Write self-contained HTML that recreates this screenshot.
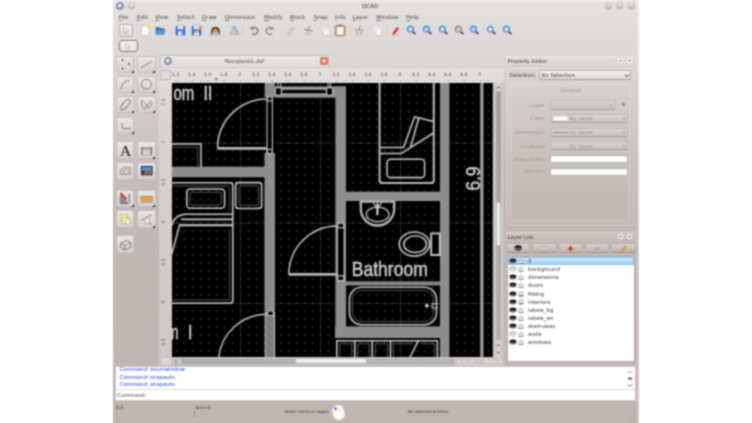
<!DOCTYPE html>
<html><head><meta charset="utf-8"><title>QCAD</title>
<style>
html,body{margin:0;padding:0;background:#fff;}
body{width:752px;height:423px;overflow:hidden;position:relative;font-family:'DejaVu Sans','Liberation Sans',sans-serif;}
#root{position:absolute;left:-12px;top:-12px;width:776px;height:447px;background:#fff;filter:url(#soft);}
#in{left:12px;top:12px;width:752px;height:423px;}
#root div,#root span,#root svg{position:absolute;box-sizing:border-box;}
.t{white-space:nowrap;line-height:10px;height:10px;}
.btn{border:0.5px solid #b5afab;border-bottom:0.8px solid #9f9995;border-radius:2px;background:linear-gradient(#dad5d2,#b8b1ad);}
.tb{border:0.6px solid #c4c1be;border-radius:2px;background:linear-gradient(#e9e7e5,#d3d0cd);}
.cmb{border:0.5px solid #bcb8b5;border-bottom:0.8px solid #a39f9c;border-radius:2px;background:linear-gradient(#d9d5d2,#c7c2bf);}
</style></head><body><svg width="0" height="0" style="position:absolute"><filter id="soft" x="0" y="0" width="100%" height="100%" color-interpolation-filters="sRGB"><feConvolveMatrix order="5" kernelMatrix="0.00037 0.00430 0.00978 0.00430 0.00037 0.00430 0.05062 0.11515 0.05062 0.00430 0.00978 0.11515 0.26192 0.11515 0.00978 0.00430 0.05062 0.11515 0.05062 0.00430 0.00037 0.00430 0.00978 0.00430 0.00037" edgeMode="duplicate" preserveAlpha="true"/></filter></svg><div id="root"><div id="in">

<div style="left:113.1px;top:-8px;width:525.9px;height:439px;background:linear-gradient(#e6e3e2 8px,#e2dfde 16px,#dbd8d6 61px,#d4d0cd 98px,#cdc8c5 133px,#c7c1bd 168px,#c2bab6 208px,#bfb7b3 283px,#bfb6b2 431px);"></div>
<div style="left:113.1px;top:0px;width:525.9px;height:0.8px;background:#f2f1f0;"></div>
<svg style="left:116.3px;top:1.6px;" width="8" height="8" viewBox="0 0 8 8"><circle cx="4" cy="4" r="3.2" fill="#dfe5f4" stroke="#4a69bd" stroke-width="1.2"/><path d="M1.6 2.6A3 3 0 0 1 4.4 1.2" stroke="#8aa2dc" stroke-width="0.8" fill="none"/><circle cx="5" cy="4.9" r="1.6" fill="#f0a22c"/><circle cx="3.6" cy="3.4" r="1" fill="#fdf3d8"/></svg>
<svg style="left:127.3px;top:1.2px;" width="9" height="9" viewBox="0 0 9 9"><circle cx="4.5" cy="4.5" r="3.9" fill="url(#tbg)"/><path d="M2.8 5L4.5 2.6L6.2 5Z" fill="#f8f7f6"/></svg>
<span class="t" style="left:270px;width:200px;text-align:center;top:0.6px;font-size:5.6px;color:#333;">QCAD</span>
<svg width="0" height="0" style="left:0;top:0"><defs><linearGradient id="tbg" x1="0" y1="0" x2="0" y2="1"><stop offset="0" stop-color="#dedcda"/><stop offset="1" stop-color="#b9b6b3"/></linearGradient></defs></svg>
<svg style="left:603.5px;top:1.1px;" width="9" height="9" viewBox="0 0 9 9"><circle cx="4.5" cy="4.5" r="3.9" fill="url(#tbg)"/><path d="M3 4.6L4.5 2.8L6 4.6Z" fill="#f6f5f4"/></svg>
<svg style="left:615.4px;top:1.1px;" width="9" height="9" viewBox="0 0 9 9"><circle cx="4.5" cy="4.5" r="3.9" fill="url(#tbg)"/><path d="M3 4.6L4.5 2.8L6 4.6Z" fill="#f6f5f4"/></svg>
<svg style="left:627.3px;top:1.1px;" width="9" height="9" viewBox="0 0 9 9"><circle cx="4.5" cy="4.5" r="3.9" fill="url(#tbg)"/><path d="M3 4.6L4.5 2.8L6 4.6Z" fill="#f6f5f4"/></svg>
<div style="left:637.4px;top:0px;width:1.2px;height:423px;background:rgba(255,255,255,0.28);"></div>
<span class="t" style="left:118.7px;top:12px;font-size:5.65px;color:#4c4a48;"><u style="text-decoration-thickness:0.3px;text-underline-offset:0.5px;text-decoration-color:#888">F</u>ile</span>
<span class="t" style="left:136.7px;top:12px;font-size:5.65px;color:#4c4a48;"><u style="text-decoration-thickness:0.3px;text-underline-offset:0.5px;text-decoration-color:#888">E</u>dit</span>
<span class="t" style="left:155px;top:12px;font-size:5.65px;color:#4c4a48;"><u style="text-decoration-thickness:0.3px;text-underline-offset:0.5px;text-decoration-color:#888">V</u>iew</span>
<span class="t" style="left:177px;top:12px;font-size:5.65px;color:#4c4a48;"><u style="text-decoration-thickness:0.3px;text-underline-offset:0.5px;text-decoration-color:#888">S</u>elect</span>
<span class="t" style="left:202px;top:12px;font-size:5.65px;color:#4c4a48;"><u style="text-decoration-thickness:0.3px;text-underline-offset:0.5px;text-decoration-color:#888">D</u>raw</span>
<span class="t" style="left:225px;top:12px;font-size:5.65px;color:#4c4a48;"><u style="text-decoration-thickness:0.3px;text-underline-offset:0.5px;text-decoration-color:#888">D</u>imension</span>
<span class="t" style="left:264px;top:12px;font-size:5.65px;color:#4c4a48;"><u style="text-decoration-thickness:0.3px;text-underline-offset:0.5px;text-decoration-color:#888">M</u>odify</span>
<span class="t" style="left:290px;top:12px;font-size:5.65px;color:#4c4a48;"><u style="text-decoration-thickness:0.3px;text-underline-offset:0.5px;text-decoration-color:#888">B</u>lock</span>
<span class="t" style="left:313.4px;top:12px;font-size:5.65px;color:#4c4a48;"><u style="text-decoration-thickness:0.3px;text-underline-offset:0.5px;text-decoration-color:#888">S</u>nap</span>
<span class="t" style="left:335px;top:12px;font-size:5.65px;color:#4c4a48;"><u style="text-decoration-thickness:0.3px;text-underline-offset:0.5px;text-decoration-color:#888">I</u>nfo</span>
<span class="t" style="left:352.5px;top:12px;font-size:5.65px;color:#4c4a48;"><u style="text-decoration-thickness:0.3px;text-underline-offset:0.5px;text-decoration-color:#888">L</u>ayer</span>
<span class="t" style="left:376px;top:12px;font-size:5.65px;color:#4c4a48;"><u style="text-decoration-thickness:0.3px;text-underline-offset:0.5px;text-decoration-color:#888">W</u>indow</span>
<span class="t" style="left:406px;top:12px;font-size:5.65px;color:#4c4a48;"><u style="text-decoration-thickness:0.3px;text-underline-offset:0.5px;text-decoration-color:#888">H</u>elp</span>
<div style="left:118.7px;top:23.5px;width:14px;height:13.5px;border:0.6px solid #b4b1ae;border-radius:2px;background:linear-gradient(#efeeed,#dddad8);"></div>
<svg style="left:120.2px;top:25px;" width="11" height="11" viewBox="0 0 11 11"><path d="M3.5 2.5L3.5 8L5 6.8L6.2 9L7 8.6L5.9 6.5L7.6 6.3Z" fill="#fff" stroke="#9a9794" stroke-width="0.6"/></svg>
<svg style="left:139.5px;top:25px;" width="11" height="11" viewBox="0 0 11 11"><path d="M1.5 0.8H8L9.3 2.2V10.4H1.5Z" fill="#fbfbfa" stroke="#b9b6b3" stroke-width="0.6"/><circle cx="8.8" cy="1.8" r="1.7" fill="#f3df3a"/></svg>
<svg style="left:155.3px;top:25px;" width="11" height="11" viewBox="0 0 11 11"><path d="M0.8 2.3H4L5 3.3H9.2V9.5H0.8Z" fill="#2f63a8"/><path d="M0.8 9.5L2.5 4.8H10.8L9.2 9.5Z" fill="#5b94d6"/></svg>
<svg style="left:175px;top:25px;" width="11" height="11" viewBox="0 0 11 11"><rect x="0.8" y="0.8" width="9.4" height="9.6" rx="1" fill="#2f6bdc"/><rect x="2.6" y="0.8" width="5.8" height="3.6" fill="#dfe9f7"/><rect x="3" y="6.4" width="5" height="4" fill="#f2f4f8"/><rect x="6.2" y="7" width="1.2" height="2.8" fill="#2f6bdc"/></svg>
<svg style="left:191px;top:25px;" width="11" height="11" viewBox="0 0 11 11"><rect x="0.8" y="0.8" width="9.4" height="9.6" rx="1" fill="#2f6bdc"/><rect x="2.6" y="0.8" width="5.8" height="3.6" fill="#dfe9f7"/><rect x="3" y="6.4" width="5" height="4" fill="#f2f4f8"/><path d="M4.5 7.5L9.5 0.8L10.8 1.8L5.8 8.4L4.2 8.9Z" fill="#eea63a" stroke="#b9781c" stroke-width="0.3"/></svg>
<svg style="left:210px;top:25px;" width="11" height="11" viewBox="0 0 11 11"><path d="M1 9.6V6.2A4.5 4.5 0 0 1 10 6.2V9.6Z" fill="#4a4643"/><path d="M3 5.6A2.6 2.4 0 0 1 8 5.6V6.8H3Z" fill="#f09a2a"/><rect x="2.2" y="7.2" width="6.6" height="2" fill="#d9d6d3"/></svg>
<svg style="left:229px;top:25px;" width="11" height="11" viewBox="0 0 11 11"><path d="M0.8 9.8V7.4L2.2 6H8.8L10.2 7.4V9.8Z" fill="#c5c2bf" stroke="#9b9895" stroke-width="0.4"/><rect x="2.8" y="1" width="5.4" height="5.4" fill="#f4f4f4" stroke="#a9c2e3" stroke-width="0.5"/><circle cx="5.2" cy="3.4" r="1.8" fill="#a9c8ee" stroke="#4d7fc0" stroke-width="0.7"/><path d="M6.5 4.8L8.4 6.8" stroke="#555" stroke-width="0.9"/></svg>
<svg style="left:249px;top:25px;" width="11" height="11" viewBox="0 0 11 11"><path d="M3 3.4A3.4 3.4 0 1 1 3.2 8.6" fill="none" stroke="#787572" stroke-width="1.35"/><path d="M0.6 3.2L4.6 1.2L4.4 5.4Z" fill="#787572"/></svg>
<svg style="left:264px;top:25px;" width="11" height="11" viewBox="0 0 11 11"><path d="M8 3.4A3.4 3.4 0 1 0 7.8 8.6" fill="none" stroke="#8a8784" stroke-width="1.35"/><path d="M10.4 3.2L6.4 1.2L6.6 5.4Z" fill="#8a8784"/></svg>
<svg style="left:285px;top:25px;" width="11" height="11" viewBox="0 0 11 11"><path d="M1.5 8.5L7 2L9.2 4L3.8 10.2Z" fill="#d6d3d0" stroke="#a7a4a1" stroke-width="0.5"/><path d="M6.4 2.8L8.6 4.8" stroke="#bbb" stroke-width="0.6"/></svg>
<svg style="left:303px;top:25px;" width="11" height="11" viewBox="0 0 11 11"><path d="M6.6 0.8L4 6.6M1 4.4L9.8 5.6" stroke="#86837f" stroke-width="0.95" fill="none"/><ellipse cx="3.6" cy="8.4" rx="1.5" ry="1.7" fill="none" stroke="#b5b2af" stroke-width="0.8"/><ellipse cx="7" cy="8.4" rx="1.5" ry="1.7" fill="none" stroke="#b5b2af" stroke-width="0.8"/></svg>
<svg style="left:320px;top:25px;" width="11" height="11" viewBox="0 0 11 11"><rect x="1" y="0.8" width="6" height="7.4" fill="#efeeed" stroke="#c3c0bd" stroke-width="0.5"/><rect x="3.6" y="3" width="6" height="7.4" fill="#f6f5f4" stroke="#bcb9b6" stroke-width="0.5"/></svg>
<svg style="left:334.4px;top:24.3px;" width="12.4" height="12.4" viewBox="0 0 11 11"><rect x="1" y="1.2" width="9" height="9.4" rx="1" fill="#c9a27a" stroke="#9a7650" stroke-width="0.5"/><rect x="2.6" y="2.8" width="5.8" height="6.6" fill="#f7f6f5"/><rect x="3.8" y="0.4" width="3.4" height="2" rx="0.6" fill="#8d8a87"/></svg>
<div style="left:349.5px;top:25px;width:0.5px;height:11px;background:#d3d0cd;"></div>
<div style="left:242.3px;top:25px;width:0.5px;height:11px;background:#c9c6c3;"></div>
<svg style="left:353.9px;top:25px;" width="11" height="11" viewBox="0 0 11 11"><path d="M6 0.8L5 6.2M1 4.6L9.8 5.4" stroke="#94918e" stroke-width="0.95" fill="none"/><path d="M3.2 6.5V10.2M7.2 6.5V10.2" stroke="#94918e" stroke-width="0.9"/></svg>
<svg style="left:372px;top:25px;" width="11" height="11" viewBox="0 0 11 11"><rect x="1" y="0.8" width="6" height="7.4" fill="#efeeed" stroke="#cbc8c5" stroke-width="0.5"/><rect x="3.6" y="3" width="6" height="7.4" fill="#f6f5f4" stroke="#c7c4c1" stroke-width="0.5"/></svg>
<div style="left:386.3px;top:25px;width:0.5px;height:11px;background:#d3d0cd;"></div>
<svg style="left:390px;top:25px;" width="11" height="11" viewBox="0 0 11 11"><path d="M2.6 8.2L7.2 2L9 3.2L4.6 9.2L2.2 9.8Z" fill="#d2281f"/><path d="M1.4 10H8.6" stroke="#e8a09a" stroke-width="0.6"/></svg>
<svg style="left:406.1px;top:24.9px;" width="11" height="11" viewBox="0 0 11 11"><path d="M6.8 6.6L9 8.8" stroke="#3a3836" stroke-width="1.5" stroke-linecap="round"/><circle cx="4.4" cy="4.2" r="3.1" fill="#8db9ee" stroke="#4f8bdc" stroke-width="1.1"/><path d="M2.8 4.2H6M4.4 2.6V5.8" stroke="#ffffff" stroke-width="0.9"/></svg>
<svg style="left:422.1px;top:24.9px;" width="11" height="11" viewBox="0 0 11 11"><path d="M6.8 6.6L9 8.8" stroke="#3a3836" stroke-width="1.5" stroke-linecap="round"/><circle cx="4.4" cy="4.2" r="3.1" fill="#8db9ee" stroke="#4f8bdc" stroke-width="1.1"/><path d="M2.8 4.2H6" stroke="#ffffff" stroke-width="0.9"/></svg>
<svg style="left:438.1px;top:24.9px;" width="11" height="11" viewBox="0 0 11 11"><path d="M6.8 6.6L9 8.8" stroke="#3a3836" stroke-width="1.5" stroke-linecap="round"/><circle cx="4.4" cy="4.2" r="3.1" fill="#8db9ee" stroke="#4f8bdc" stroke-width="1.1"/><rect x="3.2" y="3" width="2.4" height="2.4" fill="#ffffff"/></svg>
<svg style="left:453.7px;top:24.9px;" width="11" height="11" viewBox="0 0 11 11"><path d="M6.8 6.6L9 8.8" stroke="#3a3836" stroke-width="1.5" stroke-linecap="round"/><circle cx="4.4" cy="4.2" r="3.1" fill="#dddbd9" stroke="#8e8b88" stroke-width="1.1"/><rect x="2.6" y="2.4" width="3.6" height="3.6" fill="none" stroke="#8e8b88" stroke-width="0.6"/></svg>
<svg style="left:469.1px;top:24.9px;" width="11" height="11" viewBox="0 0 11 11"><path d="M6.8 6.6L9 8.8" stroke="#3a3836" stroke-width="1.5" stroke-linecap="round"/><circle cx="4.4" cy="4.2" r="3.1" fill="#8db9ee" stroke="#4f8bdc" stroke-width="1.1"/><path d="M2.8 4.2H6" stroke="#ffffff" stroke-width="1"/></svg>
<div style="left:484.9px;top:24.4px;width:10.8px;height:8.8px;background:#f4f4f3;border:0.4px solid #d6d3d0;border-radius:1px;"></div>
<svg style="left:485.6px;top:24.9px;" width="11" height="11" viewBox="0 0 11 11"><path d="M6.8 6.6L9 8.8" stroke="#3a3836" stroke-width="1.5" stroke-linecap="round"/><circle cx="4.4" cy="4.2" r="3.1" fill="#8db9ee" stroke="#4f8bdc" stroke-width="1.1"/><rect x="3" y="3" width="2.8" height="2.4" fill="#ffffff"/></svg>
<svg style="left:501.7px;top:24.9px;" width="11" height="11" viewBox="0 0 11 11"><path d="M6.8 6.6L9 8.8" stroke="#3a3836" stroke-width="1.5" stroke-linecap="round"/><circle cx="4.4" cy="4.2" r="3.1" fill="#8db9ee" stroke="#4f8bdc" stroke-width="1.1"/><path d="M2.4 4.2H6.4M4.4 2.2V6.2" stroke="#ffffff" stroke-width="0.9"/></svg>
<div style="left:118.5px;top:40.2px;width:19.6px;height:11.8px;border:1px solid #7f7c79;border-radius:3px;background:linear-gradient(#f4f3f2,#e4e2e0);"></div>
<svg style="left:123.3px;top:41.2px;" width="10" height="10" viewBox="0 0 11 11"><path d="M3.5 2.5L3.5 8L5 6.8L6.2 9L7 8.6L5.9 6.5L7.6 6.3Z" fill="#fff" stroke="#a19e9b" stroke-width="0.6"/></svg>
<div class="tb" style="left:116.1px;top:55.6px;width:18.4px;height:17.6px;"></div>
<svg style="left:116.6px;top:55.8px;" width="17.4" height="17.2" viewBox="0 0 17.4 17.2"><g fill="#4a4745"><circle cx="5.5" cy="4" r="0.9"/><circle cx="12" cy="8" r="0.9"/><circle cx="5.5" cy="12.4" r="0.9"/></g><path d="M17 14.2V17H14.2Z" fill="#3a3836"/></svg>
<div class="tb" style="left:137.2px;top:55.6px;width:18.4px;height:17.6px;"></div>
<svg style="left:137.7px;top:55.8px;" width="17.4" height="17.2" viewBox="0 0 17.4 17.2"><path d="M3.2 11.6L14.2 5.2" stroke="#7d7a77" stroke-width="1"/><path d="M17 14.2V17H14.2Z" fill="#3a3836"/></svg>
<div class="tb" style="left:116.1px;top:75.8px;width:18.4px;height:17.6px;"></div>
<svg style="left:116.6px;top:76px;" width="17.4" height="17.2" viewBox="0 0 17.4 17.2"><path d="M4 13.2A9.5 9.5 0 0 1 12.6 4.2" fill="none" stroke="#7d7a77" stroke-width="1"/><path d="M17 14.2V17H14.2Z" fill="#3a3836"/></svg>
<div class="tb" style="left:137.2px;top:75.8px;width:18.4px;height:17.6px;"></div>
<svg style="left:137.7px;top:76px;" width="17.4" height="17.2" viewBox="0 0 17.4 17.2"><circle cx="8.4" cy="8.2" r="5" fill="none" stroke="#7d7a77" stroke-width="1"/><path d="M17 14.2V17H14.2Z" fill="#3a3836"/></svg>
<div class="tb" style="left:116.1px;top:95.9px;width:18.4px;height:17.6px;"></div>
<svg style="left:116.6px;top:96.1px;" width="17.4" height="17.2" viewBox="0 0 17.4 17.2"><ellipse cx="8.4" cy="8.6" rx="6.4" ry="2.6" transform="rotate(-48 8.4 8.6)" fill="none" stroke="#7d7a77" stroke-width="1"/><path d="M17 14.2V17H14.2Z" fill="#3a3836"/></svg>
<div class="tb" style="left:137.2px;top:95.9px;width:18.4px;height:17.6px;"></div>
<svg style="left:137.7px;top:96.1px;" width="17.4" height="17.2" viewBox="0 0 17.4 17.2"><path d="M3.4 4.2C3.4 9 5 13 7 13C9.4 13 9.8 7.4 12 5.4C13.4 4.2 14.4 6.6 13.2 9.4C12 12 10.2 12 9 10C7.6 7.6 5.6 5 3.4 4.2Z" fill="none" stroke="#7d7a77" stroke-width="0.9"/><path d="M17 14.2V17H14.2Z" fill="#3a3836"/></svg>
<div class="tb" style="left:116.1px;top:116.6px;width:18.4px;height:17.6px;"></div>
<svg style="left:116.6px;top:116.8px;" width="17.4" height="17.2" viewBox="0 0 17.4 17.2"><path d="M5 6.2V9.6Q5 11.6 7 11.6H13.2" fill="none" stroke="#7d7a77" stroke-width="1"/><path d="M17 14.2V17H14.2Z" fill="#3a3836"/></svg>
<div class="tb" style="left:116.1px;top:141.4px;width:18.4px;height:17.6px;"></div>
<svg style="left:116.6px;top:141.6px;" width="17.4" height="17.2" viewBox="0 0 17.4 17.2"><text x="8.6" y="14" font-family="'Liberation Serif',serif" font-size="15.5" text-anchor="middle" fill="#161616">A</text></svg>
<div class="tb" style="left:137.2px;top:141.4px;width:18.4px;height:17.6px;"></div>
<svg style="left:137.7px;top:141.6px;" width="17.4" height="17.2" viewBox="0 0 17.4 17.2"><path d="M4 5V13M13.4 5V13M3 6.2H14.4" stroke="#55524f" stroke-width="0.9" fill="none"/><rect x="4.6" y="8" width="8.2" height="5" fill="#d9d6d3" stroke="#8b8885" stroke-width="0.6"/><path d="M17 14.2V17H14.2Z" fill="#3a3836"/></svg>
<div class="tb" style="left:116.1px;top:162px;width:18.4px;height:17.6px;"></div>
<svg style="left:116.6px;top:162.2px;" width="17.4" height="17.2" viewBox="0 0 17.4 17.2"><path d="M3.4 12.6V8L6.4 5.2H13.6V12.6Z" fill="#c9c6c3" stroke="#8b8885" stroke-width="0.7"/><circle cx="9.4" cy="9.4" r="2.2" fill="#e3e1df" stroke="#8b8885" stroke-width="0.6"/></svg>
<div class="tb" style="left:137.2px;top:162px;width:18.4px;height:17.6px;"></div>
<svg style="left:137.7px;top:162.2px;" width="17.4" height="17.2" viewBox="0 0 17.4 17.2"><rect x="3" y="4" width="11.6" height="9.4" fill="#2b2e3a"/><rect x="4" y="5" width="9.6" height="4" fill="#4f8fe0"/><path d="M4 12.4L8 8.4L10.4 10L13.6 7.8V12.4Z" fill="#9a6a3a"/></svg>
<div class="tb" style="left:116.1px;top:189.8px;width:18.4px;height:17.6px;"></div>
<svg style="left:116.6px;top:190px;" width="17.4" height="17.2" viewBox="0 0 17.4 17.2"><path d="M3.2 13.8V5.2L11.8 13.8Z" fill="#8d8a87" stroke="#5f5c59" stroke-width="0.5"/><path d="M12.2 3.6V12.6" stroke="#8f8c89" stroke-width="1.6"/><path d="M3.4 3L9.6 9.4" stroke="#d42a20" stroke-width="2"/><path d="M17 14.2V17H14.2Z" fill="#3a3836"/></svg>
<div class="tb" style="left:137.2px;top:189.8px;width:18.4px;height:17.6px;"></div>
<svg style="left:137.7px;top:190px;" width="17.4" height="17.2" viewBox="0 0 17.4 17.2"><rect x="2.8" y="6.2" width="12" height="4.2" fill="#f0a040" stroke="#b56e1a" stroke-width="0.5"/><path d="M2.6 12.2H15" stroke="#7a7774" stroke-width="0.8"/><path d="M17 14.2V17H14.2Z" fill="#3a3836"/></svg>
<div class="tb" style="left:116.1px;top:210.4px;width:18.4px;height:17.6px;"></div>
<svg style="left:116.6px;top:210.6px;" width="17.4" height="17.2" viewBox="0 0 17.4 17.2"><rect x="3.4" y="3.6" width="7" height="5.6" fill="#f5e9a6" stroke="#b9a24a" stroke-width="0.5"/><rect x="5.6" y="6.8" width="7" height="5.6" fill="#f7efc0" stroke="#b9a24a" stroke-width="0.5"/><circle cx="10.8" cy="10.8" r="2.6" fill="#fbf7df" stroke="#a9923a" stroke-width="0.6"/></svg>
<div class="tb" style="left:137.2px;top:210.4px;width:18.4px;height:17.6px;"></div>
<svg style="left:137.7px;top:210.6px;" width="17.4" height="17.2" viewBox="0 0 17.4 17.2"><path d="M3 9.4L13.6 3.6" stroke="#d6453c" stroke-width="0.9"/><circle cx="9.2" cy="9.6" r="2.9" fill="#ecebea" stroke="#9d9a97" stroke-width="0.8"/><path d="M11.4 11.8L13.4 13.8" stroke="#8b8885" stroke-width="1.1"/><path d="M17 14.2V17H14.2Z" fill="#3a3836"/></svg>
<div class="tb" style="left:116.1px;top:235.4px;width:18.4px;height:17.6px;"></div>
<svg style="left:116.6px;top:235.6px;" width="17.4" height="17.2" viewBox="0 0 17.4 17.2"><path d="M3.6 7.4L10.4 4.4L14 6.6V11L7.4 14L3.6 11.6ZM3.6 7.4L7.4 9.6L14 6.6M7.4 9.6V14" fill="none" stroke="#6a6764" stroke-width="0.8"/></svg>
<div style="left:160.2px;top:55.4px;width:169px;height:12px;border:0.6px solid #c6c3c0;border-bottom:none;border-radius:2.5px 2.5px 0 0;background:linear-gradient(#ebe9e8,#dfdcda);"></div>
<div style="left:158.6px;top:67px;width:345.4px;height:299px;background:linear-gradient(#e2dfdd,#d9d5d2 15%,#d3cfcc 50%,#cdc8c5);border-top:0.6px solid #cfccc9;"></div>
<svg style="left:163.6px;top:57.4px;" width="8" height="8" viewBox="0 0 8 8"><circle cx="4" cy="4" r="3.2" fill="#dfe5f4" stroke="#4a69bd" stroke-width="1.2"/><path d="M1.6 2.6A3 3 0 0 1 4.4 1.2" stroke="#8aa2dc" stroke-width="0.8" fill="none"/><circle cx="5" cy="4.9" r="1.6" fill="#f0a22c"/><circle cx="3.6" cy="3.4" r="1" fill="#fdf3d8"/></svg>
<span class="t" style="left:144.5px;width:200px;text-align:center;top:56.4px;font-size:5.2px;color:#4a4846;">floorplan01.dxf</span>
<svg style="left:320.3px;top:57.3px;" width="8" height="8" viewBox="0 0 8 8"><rect x="0" y="0" width="8" height="8" rx="1.6" fill="#e9715a"/><rect x="2.4" y="2.4" width="3.2" height="3.2" rx="0.6" fill="#fbe9e5"/></svg>
<div style="left:160px;top:70.3px;width:10.6px;height:10.2px;border:0.6px solid #b9b6b3;background:#dedcda;"></div>
<svg style="left:172px;top:67px;" width="321" height="16" viewBox="172 67 321 16"><g font-family="'DejaVu Sans','Liberation Sans',sans-serif" font-size="4.7" fill="#5c5a58"><text x="175.7" y="76.3" text-anchor="middle">1.2</text><text x="191.7" y="76.3" text-anchor="middle">1.4</text><text x="207.7" y="76.3" text-anchor="middle">1.6</text><text x="223.7" y="76.3" text-anchor="middle">1.8</text><text x="239.7" y="76.3" text-anchor="middle">2</text><text x="255.7" y="76.3" text-anchor="middle">2.2</text><text x="271.7" y="76.3" text-anchor="middle">2.4</text><text x="287.7" y="76.3" text-anchor="middle">2.6</text><text x="303.7" y="76.3" text-anchor="middle">2.8</text><text x="319.7" y="76.3" text-anchor="middle">3</text><text x="335.7" y="76.3" text-anchor="middle">3.2</text><text x="351.7" y="76.3" text-anchor="middle">3.4</text><text x="367.7" y="76.3" text-anchor="middle">3.6</text><text x="383.7" y="76.3" text-anchor="middle">3.8</text><text x="399.7" y="76.3" text-anchor="middle">4</text><text x="415.7" y="76.3" text-anchor="middle">4.2</text><text x="431.7" y="76.3" text-anchor="middle">4.4</text><text x="447.7" y="76.3" text-anchor="middle">4.6</text><text x="463.7" y="76.3" text-anchor="middle">4.8</text><text x="479.7" y="76.3" text-anchor="middle">5</text><path d="M176.4 82.5v-2.2M184.4 82.5v-1.2M192.4 82.5v-2.2M200.4 82.5v-1.2M208.4 82.5v-2.2M216.4 82.5v-1.2M224.4 82.5v-2.2M232.4 82.5v-1.2M240.4 82.5v-2.2M248.4 82.5v-1.2M256.4 82.5v-2.2M264.4 82.5v-1.2M272.4 82.5v-2.2M280.4 82.5v-1.2M288.4 82.5v-2.2M296.4 82.5v-1.2M304.4 82.5v-2.2M312.4 82.5v-1.2M320.4 82.5v-2.2M328.4 82.5v-1.2M336.4 82.5v-2.2M344.4 82.5v-1.2M352.4 82.5v-2.2M360.4 82.5v-1.2M368.4 82.5v-2.2M376.4 82.5v-1.2M384.4 82.5v-2.2M392.4 82.5v-1.2M400.4 82.5v-2.2M408.4 82.5v-1.2M416.4 82.5v-2.2M424.4 82.5v-1.2M432.4 82.5v-2.2M440.4 82.5v-1.2M448.4 82.5v-2.2M456.4 82.5v-1.2M464.4 82.5v-2.2M472.4 82.5v-1.2M480.4 82.5v-2.2M488.4 82.5v-1.2" stroke="#8a8683" stroke-width="0.6" fill="none"/><path d="M214.6 78.2h3l-1.5 2.2z" fill="#444"/></g></svg>
<svg style="left:160px;top:82px;" width="12" height="275" viewBox="160 82 12 275"><g font-family="'DejaVu Sans','Liberation Sans',sans-serif" font-size="4.7" fill="#5c5a58"><text transform="translate(165.2 102.1) rotate(-90)" text-anchor="middle">7.5</text><text transform="translate(165.2 142.1) rotate(-90)" text-anchor="middle">7</text><text transform="translate(165.2 182.1) rotate(-90)" text-anchor="middle">6.5</text><text transform="translate(165.2 222.1) rotate(-90)" text-anchor="middle">6</text><text transform="translate(165.2 262.1) rotate(-90)" text-anchor="middle">5.5</text><text transform="translate(165.2 302.1) rotate(-90)" text-anchor="middle">5</text><text transform="translate(165.2 342.1) rotate(-90)" text-anchor="middle">4.5</text><path d="M172 86.5h-1.0M172 94.5h-2.0M172 102.5h-1.0M172 110.5h-2.0M172 118.5h-1.0M172 126.5h-2.0M172 134.5h-1.0M172 142.5h-2.0M172 150.5h-1.0M172 158.5h-2.0M172 166.5h-1.0M172 174.5h-2.0M172 182.5h-1.0M172 190.5h-2.0M172 198.5h-1.0M172 206.5h-2.0M172 214.5h-1.0M172 222.5h-2.0M172 230.5h-1.0M172 238.5h-2.0M172 246.5h-1.0M172 254.5h-2.0M172 262.5h-1.0M172 270.5h-2.0M172 278.5h-1.0M172 286.5h-2.0M172 294.5h-1.0M172 302.5h-2.0M172 310.5h-1.0M172 318.5h-2.0M172 326.5h-1.0M172 334.5h-2.0M172 342.5h-1.0M172 350.5h-2.0" stroke="#8a8683" stroke-width="0.6" fill="none"/></g></svg>
<svg style="left:172px;top:82.6px;" width="320.8" height="274" viewBox="172 82.6 320.8 274.0"><defs><pattern id="dots" x="0" y="6" width="8" height="8" patternUnits="userSpaceOnUse"><rect x="0" y="0" width="1.1" height="1.1" fill="#5a5a5a"/></pattern></defs><rect x="172" y="82.6" width="320.8" height="274.0" fill="#000"/><rect x="172" y="82.6" width="320.8" height="274.0" fill="url(#dots)"/><path d="M240.6 82.6V356.6M320.6 82.6V356.6M400.6 82.6V356.6M480.6 82.6V356.6M172 142.6H492.8M172 222.7H492.8M172 303.2H492.8" stroke="#505050" stroke-width="0.9" stroke-dasharray="1.2 1.2" fill="none"/><rect x="274.5" y="86" width="71.5" height="11.3" fill="#8d8d8d"/><rect x="264.7" y="82" width="10.1" height="15" fill="#8d8d8d"/><rect x="264.5" y="152.5" width="10.5" height="158.5" fill="#8d8d8d"/><rect x="172" y="166.3" width="103" height="10.5" fill="#8d8d8d"/><rect x="335.4" y="86" width="10.6" height="251.5" fill="#8d8d8d"/><rect x="345" y="191.3" width="95.4" height="9.3" fill="#8d8d8d"/><rect x="440" y="82" width="9.4" height="275" fill="#8d8d8d"/><rect x="345" y="281" width="95" height="4" fill="#8a8a8a"/><rect x="335" y="326" width="105" height="11.6" fill="#8d8d8d"/><rect x="480.4" y="82" width="3" height="275" fill="#a4a4a4"/><rect x="281.6" y="88.7" width="44.8" height="4.9" fill="#000" stroke="#c6c6c6" stroke-width="1.1"/><rect x="275.2" y="87.4" width="6.2" height="7.4" fill="#000" stroke="#c6c6c6" stroke-width="1.1"/><rect x="326.6" y="87.4" width="6" height="7.4" fill="#000" stroke="#c6c6c6" stroke-width="1.1"/><path d="M278 82V87.4M280.8 82V87.4M328.2 82V87.4M330.6 82V87.4" fill="none" stroke="#c6c6c6" stroke-width="1"/><rect x="264.5" y="97" width="10.5" height="55.5" fill="#000"/><rect x="267" y="97.6" width="5.4" height="54.6" fill="#000" stroke="#c6c6c6" stroke-width="1.1"/><rect x="267.4" y="96.4" width="4.8" height="4" fill="#000" stroke="#c6c6c6" stroke-width="1.1"/><rect x="267.4" y="149" width="4.8" height="4" fill="#000" stroke="#c6c6c6" stroke-width="1.1"/><path d="M217.6 147.6A49 49 0 0 1 266.6 98.6" fill="none" stroke="#c6c6c6" stroke-width="1.5"/><path d="M217.4 148H267" fill="none" stroke="#b6b6b6" stroke-width="2.6"/><path d="M172 143.6H201V166.3" fill="none" stroke="#c6c6c6" stroke-width="1.55" stroke-linejoin="round" stroke-linecap="round"/><path d="M172 146.8H197.8V166.3" fill="none" stroke="#686868" stroke-width="0.8"/><path d="M171 182.4H230.2Q232.8 182.4 232.8 185V300.2Q232.8 302.8 230.2 302.8H171" fill="none" stroke="#c6c6c6" stroke-width="1.55" stroke-linejoin="round" stroke-linecap="round"/><path d="M171 185.6H228.4Q229.8 185.6 229.8 187V211M229.8 228.4V299.6H171" fill="none" stroke="#686868" stroke-width="0.8"/><rect x="186.8" y="188.6" width="37.8" height="19.2" rx="3.4" fill="none" stroke="#c6c6c6" stroke-width="1.55" stroke-linejoin="round" stroke-linecap="round"/><rect x="190" y="191.8" width="31.4" height="12.8" rx="1.8" fill="none" stroke="#686868" stroke-width="0.8"/><path d="M171.6 225Q175 214.6 184.6 213.9H232.4" fill="none" stroke="#c6c6c6" stroke-width="1.55" stroke-linejoin="round" stroke-linecap="round"/><path d="M171.4 255L179.8 224" fill="none" stroke="#c6c6c6" stroke-width="1.55" stroke-linejoin="round" stroke-linecap="round"/><path d="M181 219H232.4M180 224.8H232.4" fill="none" stroke="#c6c6c6" stroke-width="1.9"/><rect x="235.6" y="182.2" width="26" height="25.8" rx="2.6" fill="none" stroke="#c6c6c6" stroke-width="1.55" stroke-linejoin="round" stroke-linecap="round"/><rect x="238.8" y="185.4" width="19.8" height="19.4" rx="1.4" fill="none" stroke="#686868" stroke-width="0.8"/><rect x="337.4" y="225" width="6.8" height="53.4" fill="#000" stroke="#c6c6c6" stroke-width="1.1"/><rect x="337.8" y="222.8" width="6" height="4.6" fill="#000" stroke="#c6c6c6" stroke-width="1.1"/><rect x="337.8" y="275.4" width="6" height="4.8" fill="#000" stroke="#c6c6c6" stroke-width="1.1"/><path d="M288.8 273.6A48.6 48.6 0 0 1 337.4 225.6" fill="none" stroke="#c6c6c6" stroke-width="1.5"/><path d="M288.6 274H337.4" fill="none" stroke="#b6b6b6" stroke-width="2.6"/><rect x="265.3" y="312" width="9.2" height="47" fill="#7c7c7c" stroke="#c6c6c6" stroke-width="1.1"/><rect x="267.8" y="310.6" width="5.4" height="4.6" fill="#000" stroke="#c6c6c6" stroke-width="1.1"/><path d="M218.6 358A48.6 48.6 0 0 1 266.6 313.8" fill="none" stroke="#c6c6c6" stroke-width="1.5"/><path d="M379.6 82V180Q379.6 182.6 382.2 182.6H431.2Q433.8 182.6 433.8 180V82" fill="none" stroke="#b9b9b9" stroke-width="2"/><path d="M380 147H403.6L414.6 116.4L433.4 121.2M380 153H401.4L433.4 132.6M410.6 146.6L418.6 118.4" fill="none" stroke="#c6c6c6" stroke-width="1.55" stroke-linejoin="round" stroke-linecap="round"/><rect x="387" y="158.8" width="37.6" height="18.4" rx="3.4" fill="none" stroke="#c6c6c6" stroke-width="1.55" stroke-linejoin="round" stroke-linecap="round"/><path d="M360.8 201.2V208.4A16.7 16.7 0 0 0 394.2 208.4V201.2Z" fill="none" stroke="#b8b8b8" stroke-width="2.3"/><ellipse cx="377.6" cy="214" rx="11.4" ry="7.2" fill="none" stroke="#c6c6c6" stroke-width="1.3"/><path d="M377.4 203V214.6" stroke="#ececec" stroke-width="2"/><path d="M373.4 202.6L377.4 208.6L381.4 202.6" stroke="#c6c6c6" stroke-width="1.3" fill="none"/><ellipse cx="414.4" cy="243.7" rx="15.2" ry="12" fill="none" stroke="#c6c6c6" stroke-width="1.55" stroke-linejoin="round" stroke-linecap="round"/><ellipse cx="415.2" cy="243.8" rx="11.4" ry="8.4" fill="none" stroke="#c6c6c6" stroke-width="1.55" stroke-linejoin="round" stroke-linecap="round"/><rect x="431.2" y="233" width="8.6" height="21.6" fill="#000" stroke="#c6c6c6" stroke-width="1.9"/><rect x="349.5" y="286.9" width="87" height="37.4" rx="12" fill="none" stroke="#c2c2c2" stroke-width="1.6"/><rect x="352.5" y="289.9" width="81" height="31.4" rx="9.4" fill="none" stroke="#686868" stroke-width="0.8"/><circle cx="426.9" cy="305.4" r="1.7" fill="#f0f0f0"/><path d="M438 303.4H432.4Q431 305.4 432.4 307.6H438" fill="none" stroke="#c6c6c6" stroke-width="1.1"/><path d="M336.8 358V340.4H437.4V358M354.8 340.4V358M372.2 340.4V358M390.5 340.4V358M409.4 358L418.3 340.4" fill="none" stroke="#c6c6c6" stroke-width="1.55" stroke-linejoin="round" stroke-linecap="round"/><path d="M339.8 358V343.4H351.8V358M357.8 358V343.4H369.2V358M375.2 358V343.4H387.5V358M393.5 358V343.4H413.4M421.4 343.4H434.4V358" fill="none" stroke="#686868" stroke-width="0.8"/><text x="173.4" y="99.5" textLength="20.8" lengthAdjust="spacingAndGlyphs" font-family="'Liberation Sans',sans-serif" font-size="19.8" fill="#d2d2d2" stroke="#d2d2d2" stroke-width="0.45">om</text><text x="203.6" y="99.5" textLength="8.8" lengthAdjust="spacingAndGlyphs" font-family="'Liberation Sans',sans-serif" font-size="19.8" fill="#d2d2d2" stroke="#d2d2d2" stroke-width="0.45">II</text><text x="351.8" y="275.9" textLength="76" lengthAdjust="spacingAndGlyphs" font-family="'Liberation Sans',sans-serif" font-size="19.8" fill="#d2d2d2" stroke="#d2d2d2" stroke-width="0.45">Bathroom</text><text x="166.4" y="339" textLength="12" lengthAdjust="spacingAndGlyphs" font-family="'Liberation Sans',sans-serif" font-size="19.8" fill="#d2d2d2" stroke="#d2d2d2" stroke-width="0.45">m</text><text x="188" y="339" textLength="4.4" lengthAdjust="spacingAndGlyphs" font-family="'Liberation Sans',sans-serif" font-size="19.8" fill="#d2d2d2" stroke="#d2d2d2" stroke-width="0.45">I</text><text transform="translate(479.6 190.4) rotate(-90)" textLength="24.4" lengthAdjust="spacingAndGlyphs" font-family="'Liberation Sans',sans-serif" font-size="19.8" fill="#d2d2d2" stroke="#d2d2d2" stroke-width="0.45">6.9</text></svg>
<div style="left:492.8px;top:82.6px;width:11px;height:274px;background:linear-gradient(90deg,#c9c6c3,#d6d3d0 50%,#c4c1be);"></div>
<svg style="left:493px;top:82.6px;" width="11" height="9" viewBox="0 0 11 9"><path d="M3.6 5.6L5.4 3.6L7.2 5.6" fill="none" stroke="#5a5754" stroke-width="0.8"/></svg>
<div style="left:495.7px;top:91.4px;width:5px;height:249px;background:linear-gradient(#a39f9c,#b5b1ae);border-radius:1.5px;"></div>
<div style="left:495.5px;top:202px;width:5.2px;height:44.4px;background:linear-gradient(90deg,#e8e6e4,#f4f3f2 50%,#dcdad8);border-radius:2px;border:0.4px solid #c2bfbc;"></div>
<svg style="left:493px;top:340.6px;" width="11" height="16" viewBox="0 0 11 16"><path d="M3.6 5.4L5.4 3.4L7.2 5.4M3.6 10.6L5.4 12.6L7.2 10.6" fill="none" stroke="#5a5754" stroke-width="0.8"/></svg>
<div style="left:160px;top:357px;width:11.6px;height:9px;background:#d9d6d3;border:0.5px solid #c2bebb;"></div>
<div style="left:172px;top:356.6px;width:283px;height:9.4px;background:linear-gradient(#c1bdba,#cdc9c6 50%,#bcb8b5);"></div>
<svg style="left:172px;top:356.6px;" width="9" height="9.4" viewBox="0 0 9 9.4"><path d="M5 2.8L3 4.7L5 6.6" fill="none" stroke="#5a5754" stroke-width="0.8"/></svg>
<div style="left:181px;top:358.6px;width:274px;height:5px;background:linear-gradient(90deg,#aeaaa7,#b9b5b2);border-radius:1.5px;"></div>
<div style="left:295px;top:358.4px;width:72px;height:5.4px;background:linear-gradient(#e9e7e5,#f5f4f3 50%,#dedcda);border-radius:2.4px;border:0.4px solid #c4c1be;"></div>
<svg style="left:455px;top:356.6px;" width="20" height="9.4" viewBox="0 0 20 9.4"><path d="M4.2 2.6V6.8M10.4 2.8L8.2 4.7L10.4 6.6M15.2 2.8L17.4 4.7L15.2 6.6" fill="none" stroke="#efedeb" stroke-width="0.9"/></svg>
<span class="t" style="left:393.5px;width:200px;text-align:center;top:356.4px;font-size:5.3px;color:#f1efed;">0.1 / 1</span>
<div style="left:505.6px;top:55.6px;width:130.8px;height:10.2px;border-top:0.5px solid rgba(255,255,255,0.4);background:linear-gradient(rgba(255,255,255,0.16),rgba(255,255,255,0.02));"></div>
<span class="t" style="left:507.6px;top:55.8px;font-size:5.3px;color:#3f3d3b;">Property Editor</span>
<svg style="left:616.5px;top:57.1px;" width="7" height="7" viewBox="0 0 7 7"><circle cx="3.5" cy="3.5" r="2.9" fill="rgba(255,255,255,0.55)"/><path d="M2.3 2.9L3.5 4.3L4.7 2.9Z" fill="#4a4745"/></svg>
<svg style="left:626.1px;top:57.1px;" width="7" height="7" viewBox="0 0 7 7"><circle cx="3.5" cy="3.5" r="2.9" fill="rgba(255,255,255,0.55)"/><path d="M2.3 2.9L3.5 4.3L4.7 2.9Z" fill="#4a4745"/></svg>
<div style="left:506.4px;top:67.4px;width:128.4px;height:158.6px;border:0.6px solid rgba(255,255,255,0.35);border-radius:2.5px;box-shadow:0 0 0 0.5px rgba(120,112,108,0.35);"></div>
<span class="t" style="left:509.6px;top:70.2px;font-size:5.3px;color:#3f3d3b;">Selection:</span>
<div style="left:538.8px;top:70.4px;width:92.4px;height:9.8px;border:0.5px solid #b9b5b2;border-bottom:0.8px solid #a29e9b;border-radius:2px;background:linear-gradient(#f3f2f1,#dddad7);"></div>
<span class="t" style="left:541.6px;top:70.2px;font-size:5.3px;color:#3f3d3b;">No Selection</span>
<svg style="left:622.6px;top:72px;" width="8" height="7" viewBox="0 0 8 7"><path d="M2 2.4L4 4.8L6 2.4" fill="none" stroke="#3d3b39" stroke-width="1"/></svg>
<div style="left:510.4px;top:83.8px;width:119.8px;height:138px;border:0.5px solid rgba(255,255,255,0.22);border-radius:2.5px;"></div>
<span class="t" style="left:470.6px;width:200px;text-align:center;top:85px;font-size:5.25px;color:#9b9794;">General</span>
<span class="t" style="right:206.6px;top:99.8px;font-size:5.25px;color:#9b9794;">Layer:</span>
<div class="cmb" style="left:549.6px;top:100.3px;width:66px;height:9.4px;"></div>
<svg style="left:607.2px;top:101.6px;" width="8" height="7" viewBox="0 0 8 7"><path d="M2 2.4L4 4.6L6 2.4" fill="none" stroke="#9b9794" stroke-width="0.9"/></svg>
<svg style="left:620.2px;top:101.4px;" width="7" height="7" viewBox="0 0 7 7"><path d="M3.5 1.8V5.2M1.8 3.5H5.2" stroke="#6a6663" stroke-width="0.9"/></svg>
<span class="t" style="right:206.6px;top:113.2px;font-size:5.25px;color:#9b9794;">Color:</span>
<div class="cmb" style="left:549.6px;top:113.7px;width:78.6px;height:9.4px;"></div>
<svg style="left:619.8px;top:115px;" width="8" height="7" viewBox="0 0 8 7"><path d="M2 2.4L4 4.6L6 2.4" fill="none" stroke="#9b9794" stroke-width="0.9"/></svg>
<div style="left:553px;top:116.2px;width:15px;height:4.4px;background:#fff;border:0.3px solid #ddd;"></div>
<span class="t" style="left:570px;top:113.4px;font-size:5.25px;color:#9b9794;">By Layer</span>
<span class="t" style="right:206.6px;top:127px;font-size:5.25px;color:#9b9794;">Lineweight:</span>
<div class="cmb" style="left:549.6px;top:127.5px;width:78.6px;height:9.4px;"></div>
<svg style="left:619.8px;top:128.8px;" width="8" height="7" viewBox="0 0 8 7"><path d="M2 2.4L4 4.6L6 2.4" fill="none" stroke="#9b9794" stroke-width="0.9"/></svg>
<div style="left:553px;top:131.9px;width:15px;height:0.7px;background:#8e8a87;"></div>
<span class="t" style="left:570px;top:127.2px;font-size:5.25px;color:#9b9794;">By Layer</span>
<span class="t" style="right:206.6px;top:140.6px;font-size:5.25px;color:#9b9794;">Linetype:</span>
<div class="cmb" style="left:549.6px;top:140.9px;width:78.6px;height:9.4px;"></div>
<svg style="left:619.8px;top:142.2px;" width="8" height="7" viewBox="0 0 8 7"><path d="M2 2.4L4 4.6L6 2.4" fill="none" stroke="#9b9794" stroke-width="0.9"/></svg>
<span class="t" style="left:570px;top:140.6px;font-size:5.25px;color:#9b9794;">By Layer</span>
<span class="t" style="right:206.6px;top:154px;font-size:5.25px;color:#9b9794;">Draw Order:</span>
<div style="left:550px;top:155px;width:77.6px;height:8px;border:0.5px solid #b7b3b0;border-radius:2px;background:#fdfdfd;"></div>
<span class="t" style="right:206.6px;top:166.4px;font-size:5.25px;color:#9b9794;">Handle:</span>
<div style="left:550px;top:167.6px;width:77.6px;height:8px;border:0.5px solid #b7b3b0;border-radius:2px;background:#fbfbfa;"></div>
<div style="left:505.6px;top:231.6px;width:130.8px;height:10.2px;border-top:0.5px solid rgba(255,255,255,0.4);background:linear-gradient(rgba(255,255,255,0.16),rgba(255,255,255,0.02));"></div>
<span class="t" style="left:507.6px;top:231.8px;font-size:5.3px;color:#3f3d3b;">Layer List</span>
<svg style="left:616.5px;top:233.1px;" width="7" height="7" viewBox="0 0 7 7"><circle cx="3.5" cy="3.5" r="2.9" fill="rgba(255,255,255,0.55)"/><path d="M2.3 2.9L3.5 4.3L4.7 2.9Z" fill="#4a4745"/></svg>
<svg style="left:626.1px;top:233.1px;" width="7" height="7" viewBox="0 0 7 7"><circle cx="3.5" cy="3.5" r="2.9" fill="rgba(255,255,255,0.55)"/><path d="M2.3 2.9L3.5 4.3L4.7 2.9Z" fill="#4a4745"/></svg>
<div class="btn" style="left:506px;top:243px;width:24.4px;height:10.2px;"></div>
<div class="btn" style="left:532.4px;top:243px;width:24.4px;height:10.2px;"></div>
<div class="btn" style="left:558.8px;top:243px;width:24.4px;height:10.2px;"></div>
<div class="btn" style="left:585px;top:243px;width:24.4px;height:10.2px;"></div>
<div class="btn" style="left:611.2px;top:243px;width:24.4px;height:10.2px;"></div>
<svg style="left:514px;top:245px;" width="8.4" height="6.2" viewBox="0 0 10 7.4"><ellipse cx="5" cy="3.6" rx="4.2" ry="2.9" fill="#1d1d1d" stroke="#111" stroke-width="0.7"/><path d="M1 3.8C2.4 5.4 7.6 5.4 9 3.8" stroke="#eee" stroke-width="0.8" fill="none"/></svg>
<svg style="left:540.4px;top:245px;" width="8.4" height="6.2" viewBox="0 0 10 7.4"><ellipse cx="5" cy="3.6" rx="4.2" ry="2.9" fill="#cbc6c3" stroke="#a19b97" stroke-width="0.7"/><path d="M1 3.8C2.4 5.4 7.6 5.4 9 3.8" stroke="#e6e3e1" stroke-width="0.8" fill="none"/></svg>
<svg style="left:567.4px;top:244.6px;" width="7" height="7" viewBox="0 0 7 7"><path d="M3.5 0.8V6.2M0.8 3.5H6.2" stroke="#d8281e" stroke-width="1.6"/></svg>
<svg style="left:593.6px;top:244.6px;" width="7" height="7" viewBox="0 0 7 7"><path d="M0.8 3.5H6.2" stroke="#a3a09d" stroke-width="1.6"/></svg>
<svg style="left:618.6px;top:243.8px;" width="9" height="9" viewBox="0 0 9 9"><path d="M1.4 7.6L6.4 1.2L7.8 2.3L2.9 8.6L1 9Z" fill="#eca33a" stroke="#b4761e" stroke-width="0.4"/></svg>
<div style="left:507px;top:256px;width:128.2px;height:106px;background:#fff;border:0.6px solid #b4b0ad;"></div>
<div style="left:507.8px;top:257px;width:126.6px;height:7.8px;background:linear-gradient(#cbe6fa,#9fd0f3);border:0.4px solid #8cc3ec;border-radius:1px;"></div>
<svg style="left:509px;top:257.9px;" width="8" height="6" viewBox="0 0 8 6"><ellipse cx="3.9" cy="2.9" rx="3.5" ry="2.4" fill="#161616"/><path d="M1 3.5C2 4.6 5.8 4.6 6.8 3.5" stroke="#f4f4f4" stroke-width="0.6" fill="none"/></svg>
<svg style="left:518.4px;top:257.6px;" width="6" height="6.4" viewBox="0 0 6 6.4"><path d="M1.8 3V2A1.2 1.3 0 0 1 4.2 2V3" fill="none" stroke="#c4c1be" stroke-width="0.7"/><rect x="0.9" y="2.8" width="4.2" height="3.2" fill="#e9e8e7" stroke="#8a8784" stroke-width="0.4"/><path d="M0.8 5.9H5.2" stroke="#3c3a38" stroke-width="0.8"/></svg>
<span class="t" style="left:528px;top:255.9px;font-size:5.4px;color:#3a3836;">0</span>
<svg style="left:509px;top:266.05px;" width="8" height="6" viewBox="0 0 8 6"><ellipse cx="3.9" cy="2.9" rx="3.2" ry="2.2" fill="#f1f0ef" stroke="#8d8a87" stroke-width="0.6"/><path d="M1 2.4H6.8" stroke="#a5a29f" stroke-width="0.6"/></svg>
<svg style="left:518.4px;top:265.75px;" width="6" height="6.4" viewBox="0 0 6 6.4"><path d="M1.8 3V2A1.2 1.3 0 0 1 4.2 2V3" fill="none" stroke="#c4c1be" stroke-width="0.7"/><rect x="0.9" y="2.8" width="4.2" height="3.2" fill="#e9e8e7" stroke="#8a8784" stroke-width="0.4"/><path d="M0.8 5.9H5.2" stroke="#3c3a38" stroke-width="0.8"/></svg>
<span class="t" style="left:528px;top:264.05px;font-size:5.4px;color:#3a3836;">background</span>
<svg style="left:509px;top:274.2px;" width="8" height="6" viewBox="0 0 8 6"><ellipse cx="3.9" cy="2.9" rx="3.5" ry="2.4" fill="#161616"/><path d="M1 3.5C2 4.6 5.8 4.6 6.8 3.5" stroke="#f4f4f4" stroke-width="0.6" fill="none"/></svg>
<svg style="left:518.4px;top:273.9px;" width="6" height="6.4" viewBox="0 0 6 6.4"><path d="M1.8 3V2A1.2 1.3 0 0 1 4.2 2V3" fill="none" stroke="#c4c1be" stroke-width="0.7"/><rect x="0.9" y="2.8" width="4.2" height="3.2" fill="#e9e8e7" stroke="#8a8784" stroke-width="0.4"/><path d="M0.8 5.9H5.2" stroke="#3c3a38" stroke-width="0.8"/></svg>
<span class="t" style="left:528px;top:272.2px;font-size:5.4px;color:#3a3836;">dimensions</span>
<svg style="left:509px;top:282.35px;" width="8" height="6" viewBox="0 0 8 6"><ellipse cx="3.9" cy="2.9" rx="3.5" ry="2.4" fill="#161616"/><path d="M1 3.5C2 4.6 5.8 4.6 6.8 3.5" stroke="#f4f4f4" stroke-width="0.6" fill="none"/></svg>
<svg style="left:518.4px;top:282.05px;" width="6" height="6.4" viewBox="0 0 6 6.4"><path d="M1.8 3V2A1.2 1.3 0 0 1 4.2 2V3" fill="none" stroke="#c4c1be" stroke-width="0.7"/><rect x="0.9" y="2.8" width="4.2" height="3.2" fill="#e9e8e7" stroke="#8a8784" stroke-width="0.4"/><path d="M0.8 5.9H5.2" stroke="#3c3a38" stroke-width="0.8"/></svg>
<span class="t" style="left:528px;top:280.35px;font-size:5.4px;color:#3a3836;">doors</span>
<svg style="left:509px;top:290.5px;" width="8" height="6" viewBox="0 0 8 6"><ellipse cx="3.9" cy="2.9" rx="3.5" ry="2.4" fill="#161616"/><path d="M1 3.5C2 4.6 5.8 4.6 6.8 3.5" stroke="#f4f4f4" stroke-width="0.6" fill="none"/></svg>
<svg style="left:518.4px;top:290.2px;" width="6" height="6.4" viewBox="0 0 6 6.4"><path d="M1.8 3V2A1.2 1.3 0 0 1 4.2 2V3" fill="none" stroke="#c4c1be" stroke-width="0.7"/><rect x="0.9" y="2.8" width="4.2" height="3.2" fill="#e9e8e7" stroke="#8a8784" stroke-width="0.4"/><path d="M0.8 5.9H5.2" stroke="#3c3a38" stroke-width="0.8"/></svg>
<span class="t" style="left:528px;top:288.5px;font-size:5.4px;color:#3a3836;">fitting</span>
<svg style="left:509px;top:298.65px;" width="8" height="6" viewBox="0 0 8 6"><ellipse cx="3.9" cy="2.9" rx="3.5" ry="2.4" fill="#161616"/><path d="M1 3.5C2 4.6 5.8 4.6 6.8 3.5" stroke="#f4f4f4" stroke-width="0.6" fill="none"/></svg>
<svg style="left:518.4px;top:298.35px;" width="6" height="6.4" viewBox="0 0 6 6.4"><path d="M1.8 3V2A1.2 1.3 0 0 1 4.2 2V3" fill="none" stroke="#c4c1be" stroke-width="0.7"/><rect x="0.9" y="2.8" width="4.2" height="3.2" fill="#e9e8e7" stroke="#8a8784" stroke-width="0.4"/><path d="M0.8 5.9H5.2" stroke="#3c3a38" stroke-width="0.8"/></svg>
<span class="t" style="left:528px;top:296.65px;font-size:5.4px;color:#3a3836;">interiors</span>
<svg style="left:509px;top:306.8px;" width="8" height="6" viewBox="0 0 8 6"><ellipse cx="3.9" cy="2.9" rx="3.5" ry="2.4" fill="#161616"/><path d="M1 3.5C2 4.6 5.8 4.6 6.8 3.5" stroke="#f4f4f4" stroke-width="0.6" fill="none"/></svg>
<svg style="left:518.4px;top:306.5px;" width="6" height="6.4" viewBox="0 0 6 6.4"><path d="M1.8 3V2A1.2 1.3 0 0 1 4.2 2V3" fill="none" stroke="#c4c1be" stroke-width="0.7"/><rect x="0.9" y="2.8" width="4.2" height="3.2" fill="#e9e8e7" stroke="#8a8784" stroke-width="0.4"/><path d="M0.8 5.9H5.2" stroke="#3c3a38" stroke-width="0.8"/></svg>
<span class="t" style="left:528px;top:304.8px;font-size:5.4px;color:#3a3836;">labels_bg</span>
<svg style="left:509px;top:314.95px;" width="8" height="6" viewBox="0 0 8 6"><ellipse cx="3.9" cy="2.9" rx="3.5" ry="2.4" fill="#161616"/><path d="M1 3.5C2 4.6 5.8 4.6 6.8 3.5" stroke="#f4f4f4" stroke-width="0.6" fill="none"/></svg>
<svg style="left:518.4px;top:314.65px;" width="6" height="6.4" viewBox="0 0 6 6.4"><path d="M1.8 3V2A1.2 1.3 0 0 1 4.2 2V3" fill="none" stroke="#c4c1be" stroke-width="0.7"/><rect x="0.9" y="2.8" width="4.2" height="3.2" fill="#e9e8e7" stroke="#8a8784" stroke-width="0.4"/><path d="M0.8 5.9H5.2" stroke="#3c3a38" stroke-width="0.8"/></svg>
<span class="t" style="left:528px;top:312.95px;font-size:5.4px;color:#3a3836;">labels_en</span>
<svg style="left:509px;top:323.1px;" width="8" height="6" viewBox="0 0 8 6"><ellipse cx="3.9" cy="2.9" rx="3.5" ry="2.4" fill="#161616"/><path d="M1 3.5C2 4.6 5.8 4.6 6.8 3.5" stroke="#f4f4f4" stroke-width="0.6" fill="none"/></svg>
<svg style="left:518.4px;top:322.8px;" width="6" height="6.4" viewBox="0 0 6 6.4"><path d="M1.8 3V2A1.2 1.3 0 0 1 4.2 2V3" fill="none" stroke="#c4c1be" stroke-width="0.7"/><rect x="0.9" y="2.8" width="4.2" height="3.2" fill="#e9e8e7" stroke="#8a8784" stroke-width="0.4"/><path d="M0.8 5.9H5.2" stroke="#3c3a38" stroke-width="0.8"/></svg>
<span class="t" style="left:528px;top:321.1px;font-size:5.4px;color:#3a3836;">staircases</span>
<svg style="left:509px;top:331.25px;" width="8" height="6" viewBox="0 0 8 6"><ellipse cx="3.9" cy="2.9" rx="3.2" ry="2.2" fill="#f1f0ef" stroke="#8d8a87" stroke-width="0.6"/><path d="M1 2.4H6.8" stroke="#a5a29f" stroke-width="0.6"/></svg>
<svg style="left:518.4px;top:330.95px;" width="6" height="6.4" viewBox="0 0 6 6.4"><path d="M1.8 3V2A1.2 1.3 0 0 1 4.2 2V3" fill="none" stroke="#c4c1be" stroke-width="0.7"/><rect x="0.9" y="2.8" width="4.2" height="3.2" fill="#e9e8e7" stroke="#8a8784" stroke-width="0.4"/><path d="M0.8 5.9H5.2" stroke="#3c3a38" stroke-width="0.8"/></svg>
<span class="t" style="left:528px;top:329.25px;font-size:5.4px;color:#3a3836;">walls</span>
<svg style="left:509px;top:339.4px;" width="8" height="6" viewBox="0 0 8 6"><ellipse cx="3.9" cy="2.9" rx="3.5" ry="2.4" fill="#161616"/><path d="M1 3.5C2 4.6 5.8 4.6 6.8 3.5" stroke="#f4f4f4" stroke-width="0.6" fill="none"/></svg>
<svg style="left:518.4px;top:339.1px;" width="6" height="6.4" viewBox="0 0 6 6.4"><path d="M1.8 3V2A1.2 1.3 0 0 1 4.2 2V3" fill="none" stroke="#c4c1be" stroke-width="0.7"/><rect x="0.9" y="2.8" width="4.2" height="3.2" fill="#e9e8e7" stroke="#8a8784" stroke-width="0.4"/><path d="M0.8 5.9H5.2" stroke="#3c3a38" stroke-width="0.8"/></svg>
<span class="t" style="left:528px;top:337.4px;font-size:5.4px;color:#3a3836;">windows</span>
<div style="left:115.4px;top:366.4px;width:521px;height:34.6px;background:#fff;border:0.5px solid #c9c5c2;border-radius:1.5px;overflow:hidden;"></div>
<div style="left:116px;top:388.8px;width:520px;height:0.6px;background:#dcdad8;"></div>
<span class="t" style="left:119.6px;top:364.4px;font-size:5.3px;color:#2b3fd0;"><i>Command:</i> zoomwindow</span>
<span class="t" style="left:119.6px;top:371.5px;font-size:5.3px;color:#2b3fd0;"><i>Command:</i> snapauto</span>
<span class="t" style="left:119.6px;top:378.9px;font-size:5.3px;color:#2b3fd0;"><i>Command:</i> snapauto</span>
<svg style="left:626.4px;top:368.6px;" width="8" height="20" viewBox="0 0 8 20"><path d="M1.6 3.2H6.4" stroke="#8b8885" stroke-width="0.8"/><path d="M1.6 10.6A2.4 2.4 0 0 1 6.4 10.6Z" fill="#5d5a57"/><path d="M1.8 15.2L4 17.6L6.2 15.2" fill="none" stroke="#5d5a57" stroke-width="0.9"/></svg>
<span class="t" style="left:117.2px;top:389.8px;font-size:5.3px;color:#4a4846;">Command:</span>
<span class="t" style="left:115.8px;top:403px;font-size:4.7px;color:#3a3836;">0,0</span>
<div style="left:194px;top:411px;width:0.6px;height:6.4px;background:#8f8b88;"></div>
<div style="left:116.2px;top:411.6px;width:0.5px;height:5px;background:#a39f9c;"></div>
<span class="t" style="left:195.4px;top:403px;font-size:4.7px;color:#3a3836;">kan=0</span>
<span class="t" style="left:206.8px;width:200px;text-align:center;top:407.2px;font-size:4px;color:#3a3836;">Select entity or region</span>
<svg style="left:331px;top:403.6px;" width="15" height="17" viewBox="0 0 15 17"><g transform="rotate(-14 7.5 8.5)"><rect x="1.8" y="1" width="11.4" height="15" rx="5.4" fill="#fbfbfa" stroke="#dcd9d6" stroke-width="0.5"/><path d="M7.5 1.4V6.4M2.2 6.6H12.8" stroke="#d5d2cf" stroke-width="0.4"/><rect x="4.2" y="2.6" width="2.4" height="2.6" rx="0.8" fill="#3f6fd0"/></g></svg>
<span class="t" style="left:328.5px;width:200px;text-align:center;top:407.2px;font-size:4px;color:#3a3836;">No selected entities.</span>
<svg style="left:626px;top:411px;" width="12" height="12" viewBox="0 0 12 12"><path d="M11 3L3 11M11 6L6 11M11 9L9 11" stroke="#a7a3a0" stroke-width="0.7"/></svg>
</div></div></body></html>
